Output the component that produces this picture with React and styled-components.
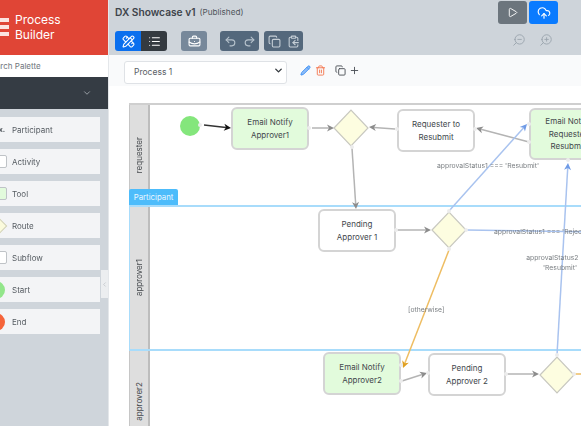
import React from 'react';
import styled, { createGlobalStyle } from 'styled-components';
import {
  PencilRuler, List, BriefcaseBusiness, Undo2, Redo2, Copy, ClipboardCopy, Play,
  CloudUpload, ZoomIn, ZoomOut, Pencil, Trash2, Plus, ChevronDown, ChevronLeft,
} from 'lucide-react';

const GlobalStyle = createGlobalStyle`
  html, body { margin: 0; padding: 0; height: 100%; overflow: hidden; }
  body { font-family: Inter, "Liberation Sans", sans-serif; color: #4a4f55; background: #fff; }
  #root { height: 100%; }
`;

const Page = styled.div`
  display: flex;
  width: 581px;
  height: 426px;
  overflow: hidden;
  filter: blur(0.4px);
`;

/* sidebar */
const Sidebar = styled.aside`
  position: relative;
  flex: 0 0 109px;
  display: flex;
  flex-direction: column;
  background: #cfd5db;
  border-right: 1px solid #e4e7ea;
  box-sizing: border-box;
  overflow: hidden;
`;
const Brand = styled.div`
  height: 55px;
  box-sizing: border-box;
  padding-bottom: 2px;
  display: flex;
  align-items: center;
  gap: 6px;
  background: #e04536;
  color: #fff;
  font-size: 12px;
  line-height: 15px;
`;
const BrandMark = styled.div`
  width: 9px;
  display: flex;
  flex-direction: column;
  gap: 3px;
  span { height: 4px; background: #fbe3e0; }
`;
const SearchRow = styled.div`
  height: 22px;
  display: flex;
  align-items: center;
  background: #fff;
  color: #6f767d;
  font-size: 8px;
  white-space: nowrap;
  span { margin-left: -14px; }
`;
const GroupBar = styled.div`
  height: 32px;
  display: flex;
  align-items: center;
  justify-content: flex-end;
  padding-right: 16px;
  background: #353c44;
  color: #aab0b6;
`;
const Palette = styled.div`
  margin: 8px 0 0 -20px;
  width: 120px;
  display: flex;
  flex-direction: column;
  gap: 7px;
`;
const PaletteItem = styled.div`
  height: 25px;
  display: flex;
  align-items: center;
  background: #f3f4f6;
  font-size: 8px;
  color: #555b61;
`;
const PaletteIcon = styled.div`
  flex: 0 0 32px;
  display: flex;
  align-items: center;
  justify-content: center;
`;
const SwatchBox = styled.div`
  width: 22px;
  height: 13px;
  box-sizing: border-box;
  border-radius: 2px;
  border: 1px solid #bfc3c7;
  background: ${p => p.$fill};
`;
const SwatchDot = styled.div`
  width: 18px;
  height: 18px;
  border-radius: 50%;
  background: ${p => p.$fill};
`;
const SwatchDiamond = styled.div`
  width: 16px;
  height: 16px;
  box-sizing: border-box;
  transform: rotate(45deg);
  border: 1px solid #cfcfb8;
  background: #fbfbdc;
`;
const ParticipantMark = styled.span`
  margin-left: 12px;
  font-size: 7px;
  font-weight: 700;
`;
const CollapseHandle = styled.div`
  position: absolute;
  top: 270px;
  right: 0;
  width: 7px;
  height: 28px;
  display: flex;
  align-items: center;
  justify-content: center;
  background: #eceef0;
  color: #b4b9be;
`;

/* main area */
const Main = styled.main`
  flex: 1;
  display: flex;
  flex-direction: column;
  min-width: 0;
`;
const TopBar = styled.header`
  height: 55px;
  box-sizing: border-box;
  display: flex;
  justify-content: space-between;
  padding: 1px 23px 0 6px;
  background: #ced4da;
`;
const TitleBlock = styled.div`
  display: flex;
  flex-direction: column;
  gap: 8px;
`;
const Title = styled.div`
  height: 22px;
  display: flex;
  align-items: center;
  gap: 4px;
  font-size: 10.2px;
  font-weight: 600;
  color: #3e444b;
`;
const Status = styled.span`
  font-size: 8.2px;
  font-weight: 400;
  color: #50565c;
`;
const Toolbar = styled.div`
  display: flex;
  gap: 5px;
`;
const ButtonGroup = styled.div`
  display: flex;
  margin-right: ${p => p.$after || 0}px;
  border-radius: 3px;
  overflow: hidden;
`;
const ToolButton = styled.div`
  width: ${p => p.$w || 26}px;
  height: 20px;
  display: flex;
  align-items: center;
  justify-content: center;
  background: ${p => p.$bg};
  color: ${p => p.$color || '#fff'};
`;
const ActionBlock = styled.div`
  display: flex;
  flex-direction: column;
  align-items: center;
  gap: 9px;
`;
const ActionRow = styled.div`
  display: flex;
  gap: 2px;
`;
const ActionButton = styled.div`
  width: 29px;
  height: 23px;
  border-radius: 3px;
  display: flex;
  align-items: center;
  justify-content: center;
  background: ${p => p.$bg};
  color: #fff;
`;
const ZoomRow = styled.div`
  display: flex;
  gap: 13px;
  padding-left: 8px;
  color: #98a2ac;
  svg { transform: scaleX(-1); }
`;
const SubBar = styled.div`
  height: 31px;
  box-sizing: border-box;
  padding: 4px 0 0 15px;
  display: flex;
  align-items: flex-start;
  background: #f9fafb;
`;
const SelectWrap = styled.div`
  position: relative;
  width: 163px;
  height: 23px;
  margin-right: 13px;
`;
const ProcessSelect = styled.select`
  appearance: none;
  width: 100%;
  height: 100%;
  box-sizing: border-box;
  padding: 0 0 0 9px;
  border: 1px solid #dfe2e6;
  border-radius: 3px;
  background: #fff;
  font: 400 8.5px Inter, "Liberation Sans", sans-serif;
  color: #5a6066;
`;
const SelectArrow = styled.span`
  position: absolute;
  right: 3px;
  top: 6px;
  display: flex;
  color: #33383d;
  pointer-events: none;
`;
const IconRow = styled.div`
  height: 23px;
  display: flex;
  align-items: center;
  margin-right: ${p => p.$after || 0}px;
  gap: ${p => p.$gap || 0}px;
`;

/* canvas */
const Canvas = styled.section`
  position: relative;
  flex: 1;
  background: #fff;
  overflow: hidden;
  padding: 17px 0 0 20px;
`;
const Pool = styled.div`
  width: 520px;
  border-top: 2px solid #cfcfcf;
`;
const Lane = styled.div`
  display: flex;
  height: ${p => p.$h}px;
  box-sizing: border-box;
  border-left: 1px solid ${p => (p.$active ? '#a8dcfb' : '#c6c6c6')};
  border-top: ${p => (p.$active ? '2px solid #a8dcfb' : 'none')};
  border-bottom: ${p => (p.$active ? '2px solid #a8dcfb' : 'none')};
`;
const LaneName = styled.div`
  flex: 0 0 20px;
  box-sizing: border-box;
  display: flex;
  align-items: center;
  justify-content: center;
  background: #dedede;
  border-right: 2px solid #bdbdbd;
  font-size: 8px;
  color: #45494d;
  span { writing-mode: vertical-rl; transform: rotate(180deg); }
`;
const LaneTag = styled.div`
  position: absolute;
  left: 20px;
  top: 103px;
  width: 49px;
  height: 16px;
  display: flex;
  align-items: center;
  justify-content: center;
  border-radius: 2px 2px 0 0;
  background: #4dbcfb;
  color: #eaf7ff;
  font-size: 7.8px;
`;
const Edges = styled.svg`
  position: absolute;
  left: 0;
  top: 0;
`;
const Node = styled.div`
  position: absolute;
  left: ${p => p.$x - 109}px;
  top: ${p => p.$y - 86}px;
  width: 78px;
  height: ${p => p.$h || 43}px;
  box-sizing: border-box;
  display: flex;
  align-items: center;
  justify-content: center;
  text-align: center;
  border: 2px solid #d4d4d4;
  border-radius: 6px;
  background: ${p => (p.$tool ? '#e2fbdc' : '#fff')};
  font-size: 8px;
  line-height: 12.5px;
  color: #42474c;
`;
const EdgeLabel = styled.div`
  position: absolute;
  left: ${p => p.$x - 109}px;
  top: ${p => p.$y - 86}px;
  width: ${p => p.$w || 'auto'};
  text-align: ${p => (p.$w ? 'center' : 'left')};
  font-size: 6.8px;
  line-height: 10px;
  color: #7c8084;
  white-space: ${p => (p.$w ? 'normal' : 'nowrap')};
`;

const GREY = '#b4b4b4';
const HEAD_GREY = '#8c8c8c';
const BLUE = '#a9c3ef';
const ORANGE = '#eebd62';

const edges = [
  { from: [204, 125], to: [231, 128], color: '#333', head: '#111' },
  { from: [312, 128], to: [334, 128] },
  { from: [395, 129], to: [369, 127] },
  { from: [529, 142], to: [476, 128] },
  { from: [352, 148], to: [356, 209] },
  { from: [397, 230], to: [431, 230] },
  { from: [449, 211], to: [527, 124], color: BLUE, head: '#6f9be6' },
  { from: [557, 355], to: [568, 163], color: BLUE, head: '#6f9be6' },
  { from: [467, 230], to: [590, 232], color: BLUE },
  { from: [449, 250], to: [403, 368], color: ORANGE, head: '#e0a020' },
  { from: [402, 381], to: [427, 373] },
  { from: [507, 374], to: [539, 374] },
  { from: [575, 374], to: [590, 374], color: ORANGE },
];

const diamonds = [[351, 128], [449, 230], [557, 375]];

const ports = [
  [200, 125], [309, 128], [397, 129], [475, 129], [529, 124], [529, 142], [568, 160],
  [449, 211], [352, 147], [396, 230], [466, 230], [449, 249], [401, 365], [401, 381],
  [428, 373], [506, 374], [557, 355], [574, 374],
];

const Arrow = ({ from, to, color = GREY, head = HEAD_GREY }) => {
  const dx = to[0] - from[0];
  const dy = to[1] - from[1];
  const len = Math.hypot(dx, dy);
  const ux = dx / len;
  const uy = dy / len;
  const back = [to[0] - ux * 7, to[1] - uy * 7];
  const notch = [to[0] - ux * 5, to[1] - uy * 5];
  const a = [back[0] - uy * 3.5, back[1] + ux * 3.5];
  const b = [back[0] + uy * 3.5, back[1] - ux * 3.5];
  const off = to[0] > 581;
  return (
    <g>
      <line x1={from[0]} y1={from[1]} x2={notch[0]} y2={notch[1]} stroke={color} strokeWidth="1.5" />
      {!off && <polygon points={[to, a, notch, b].map(p => p.join(',')).join(' ')} fill={head} />}
    </g>
  );
};

const paletteItems = [
  { name: 'Participant', icon: <ParticipantMark>x.</ParticipantMark> },
  { name: 'Activity', icon: <SwatchBox $fill="#fff" /> },
  { name: 'Tool', icon: <SwatchBox $fill="#e2fbdc" /> },
  { name: 'Route', icon: <SwatchDiamond /> },
  { name: 'Subflow', icon: <SwatchBox $fill="#fff" /> },
  { name: 'Start', icon: <SwatchDot $fill="#93e68b" /> },
  { name: 'End', icon: <SwatchDot $fill="#f5643a" /> },
];

const App = () => (
  <Page>
    <GlobalStyle />
    <Sidebar>
      <Brand>
        <BrandMark><span /><span /><span /></BrandMark>
        <div>Process<br />Builder</div>
      </Brand>
      <SearchRow><span>Search Palette</span></SearchRow>
      <GroupBar><ChevronDown size={10} /></GroupBar>
      <Palette>
        {paletteItems.map(item => (
          <PaletteItem key={item.name}>
            <PaletteIcon>{item.icon}</PaletteIcon>
            {item.name}
          </PaletteItem>
        ))}
      </Palette>
      <CollapseHandle><ChevronLeft size={7} /></CollapseHandle>
    </Sidebar>

    <Main>
      <TopBar>
        <TitleBlock>
          <Title>DX Showcase v1 <Status>(Published)</Status></Title>
          <Toolbar>
            <ButtonGroup $after={9}>
              <ToolButton $bg="#0a6fee"><PencilRuler size={13} /></ToolButton>
              <ToolButton $bg="#343a40"><List size={13} /></ToolButton>
            </ButtonGroup>
            <ButtonGroup $after={8}>
              <ToolButton $bg="#77889a"><BriefcaseBusiness size={13} /></ToolButton>
            </ButtonGroup>
            <ButtonGroup>
              <ToolButton $bg="#54687c" $w={20} $color="#b6c2cc"><Undo2 size={13} /></ToolButton>
              <ToolButton $bg="#54687c" $w={19} $color="#b6c2cc"><Redo2 size={13} /></ToolButton>
            </ButtonGroup>
            <ButtonGroup>
              <ToolButton $bg="#54687c" $w={20} $color="#c5ced6"><Copy size={13} /></ToolButton>
              <ToolButton $bg="#54687c" $w={19} $color="#c5ced6"><ClipboardCopy size={13} /></ToolButton>
            </ButtonGroup>
          </Toolbar>
        </TitleBlock>
        <ActionBlock>
          <ActionRow>
            <ActionButton $bg="#6c757d"><Play size={11} /></ActionButton>
            <ActionButton $bg="#0a7bff"><CloudUpload size={14} /></ActionButton>
          </ActionRow>
          <ZoomRow>
            <ZoomOut size={14} strokeWidth={1.5} />
            <ZoomIn size={14} strokeWidth={1.5} />
          </ZoomRow>
        </ActionBlock>
      </TopBar>

      <SubBar>
        <SelectWrap>
          <ProcessSelect defaultValue="Process 1">
            <option>Process 1</option>
          </ProcessSelect>
          <SelectArrow><ChevronDown size={11} strokeWidth={3} /></SelectArrow>
        </SelectWrap>
        <IconRow $after={9} $gap={4}>
          <Pencil size={11} color="#3b8ff5" fill="#8dbcf7" />
          <Trash2 size={11} color="#f4764f" />
        </IconRow>
        <IconRow $gap={3}>
          <Copy size={11} color="#4a4f55" />
          <Plus size={11} color="#4a4f55" />
        </IconRow>
      </SubBar>

      <Canvas>
        <Pool>
          <Lane $h={100}>
            <LaneName><span>requester</span></LaneName>
          </Lane>
          <Lane $h={146} $active>
            <LaneName><span>approver1</span></LaneName>
          </Lane>
          <Lane $h={100}>
            <LaneName><span>approver2</span></LaneName>
          </Lane>
        </Pool>
        <LaneTag>Participant</LaneTag>

        <Node $x={231} $y={107} $tool>Email Notify<br />Approver1</Node>
        <Node $x={397} $y={109}>Requester to<br />Resubmit</Node>
        <Node $x={529} $y={108} $h={52} $tool>Email Notify<br />Requester<br />Resubmit</Node>
        <Node $x={318} $y={209}>Pending<br />Approver 1</Node>
        <Node $x={323} $y={352} $tool>Email Notify<br />Approver2</Node>
        <Node $x={428} $y={353}>Pending<br />Approver 2</Node>

        <Edges width="472" height="340" viewBox="109 86 472 340">
          <circle cx="190" cy="126" r="10" fill="#84e67c" />
          {diamonds.map(([x, y]) => (
            <polygon
              key={x}
              points={`${x - 17},${y} ${x},${y - 18} ${x + 17},${y} ${x},${y + 18}`}
              fill="#fdfde0"
              stroke="#c8c8c0"
              strokeWidth="1.2"
            />
          ))}
          {edges.map(edge => <Arrow key={edge.from.join() + edge.to.join()} {...edge} />)}
          {ports.map(([x, y]) => <circle key={`${x}-${y}`} cx={x} cy={y} r="2" fill="#ececec" />)}
        </Edges>

        <EdgeLabel $x={437} $y={161}>approvalStatus1 === 'Resubmit'</EdgeLabel>
        <EdgeLabel $x={494} $y={227}>approvalStatus1 === 'Rejected'</EdgeLabel>
        <EdgeLabel $x={510} $y={253} $w="100px">approvalStatus2 === 'Resubmit'</EdgeLabel>
        <EdgeLabel $x={408} $y={305}>[otherwise]</EdgeLabel>
      </Canvas>
    </Main>
  </Page>
);

export default App;
